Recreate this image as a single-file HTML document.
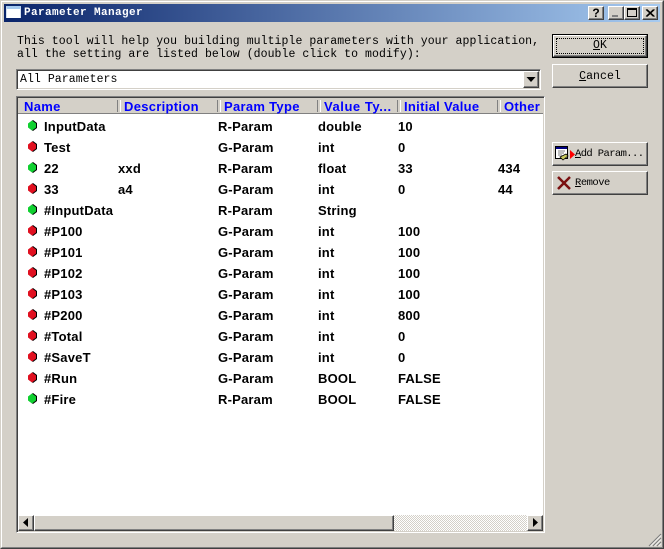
<!DOCTYPE html>
<html><head><meta charset="utf-8"><style>
html,body{margin:0;padding:0}
body{width:664px;height:549px;overflow:hidden;background:#d4d0c8;position:relative}
div,span.a,svg.a{position:absolute;box-sizing:border-box}
.mono{font-family:"Liberation Mono",monospace;font-size:11.5px;letter-spacing:.06px;color:#000;white-space:pre}
.btn{background:#d4d0c8;border:1px solid;border-color:#fff #404040 #404040 #fff;box-shadow:inset -1px -1px 0 #808080}
.cap{background:#d4d0c8;border:1px solid;border-color:#fff #404040 #404040 #fff;box-shadow:inset -1px -1px 0 #808080}
.h{position:absolute;top:99px;font:bold 13px "Liberation Sans",sans-serif;color:#0000ff;letter-spacing:.3px;line-height:15px;white-space:pre}
.sep{position:absolute;top:100px;width:2px;height:12px;border-left:1px solid #808080;border-right:1px solid #fff}
.t{position:absolute;font:bold 13px "Liberation Sans",sans-serif;letter-spacing:.2px;color:#000;line-height:16px;white-space:pre}
u{text-decoration:underline}
</style></head><body>
<div style="left:0;top:0;width:664px;height:549px;border:1px solid;border-color:#d4d0c8 #404040 #404040 #d4d0c8"></div>
<div style="left:1px;top:1px;width:662px;height:547px;border:1px solid;border-color:#fff #808080 #808080 #fff"></div>

<div style="left:4px;top:4px;width:656px;height:18px;background:linear-gradient(90deg,#0a246a,#a6caf0)"></div>
<div style="left:6px;top:6px;width:15px;height:12px;background:#fff;border-top:3px solid #a6caf0;border-left:1px solid #d4e0f0;border-right:1px solid #d4e0f0"></div>
<div class="mono" style="left:24px;top:6px;font-weight:bold;font-size:11px;letter-spacing:.4px;color:#fff;line-height:15px">Parameter Manager</div>

<div class="cap" style="left:588px;top:6px;width:16px;height:14px"></div>
<div style="left:588px;top:6px;width:16px;height:14px;font:bold 12px/14px 'Liberation Sans',sans-serif;text-align:center;color:#000">?</div>
<div class="cap" style="left:608px;top:6px;width:16px;height:14px"></div>
<div style="left:612px;top:15px;width:6px;height:2px;background:#808080"></div>
<div class="cap" style="left:624px;top:6px;width:16px;height:14px"></div>
<div style="left:627px;top:8px;width:10px;height:9px;border:1px solid #000;border-top-width:2px"></div>
<div class="cap" style="left:642px;top:6px;width:16px;height:14px"></div>
<svg class="a" style="left:642px;top:6px" width="16" height="14"><path d="M4 3.500L11.500 10.500M5 3.500L12.500 10.500M11.500 3.500L4 10.500M12.500 3.500L5 10.500" stroke="#000" stroke-width="1"/></svg>

<div class="mono" style="left:17px;top:35px;line-height:13px">This tool will help you building multiple parameters with your application,
all the setting are listed below (double click to modify):</div>

<!-- combo -->
<div style="left:16px;top:69px;width:525px;height:21px;background:#fff;border:1px solid;border-color:#808080 #fff #fff #808080;box-shadow:inset 1px 1px 0 #404040,inset -1px -1px 0 #d4d0c8"></div>
<div class="mono" style="left:20px;top:73px;line-height:14px">All Parameters</div>
<div class="btn" style="left:523px;top:71px;width:16px;height:17px"></div>
<svg class="a" style="left:523px;top:71px" width="16" height="17"><path d="M3.500 6h9l-4.500 5z" fill="#000"/></svg>

<!-- buttons -->
<div style="left:552px;top:34px;width:96px;height:24px;background:#000"></div>
<div class="btn" style="left:553px;top:35px;width:94px;height:22px"></div>
<div style="left:556px;top:38px;width:88px;height:16px;border:1px dotted #000"></div>
<div class="mono" style="left:552px;top:38px;width:96px;text-align:center;line-height:15px"><u>O</u>K</div>
<div class="btn" style="left:552px;top:64px;width:96px;height:24px"></div>
<div class="mono" style="left:552px;top:69px;width:96px;text-align:center;line-height:15px"><u>C</u>ancel</div>

<div class="btn" style="left:552px;top:142px;width:96px;height:24px"></div>
<svg class="a" style="left:555px;top:146px" width="20" height="16">
<rect x="0.500" y="0.500" width="12" height="12" fill="#fff" stroke="#000"/><rect x="1" y="1" width="11" height="2" fill="#000080"/>
<path d="M3 5h7M3 7h6M3 9h4" stroke="#808080"/><path d="M5 11l3 3 5-4-2-2z" fill="#c8c860" stroke="#000" stroke-width=".8"/>
<path d="M15 4l5 4.500-5 4.500z" fill="#ff0000"/></svg>
<div class="mono" style="left:575px;top:147px;font-size:10.500px;letter-spacing:-.6px;line-height:14px"><u>A</u>dd Param...</div>
<div class="btn" style="left:552px;top:171px;width:96px;height:24px"></div>
<svg class="a" style="left:557px;top:176px" width="14" height="14"><path d="M1 1L13 13M13 1L1 13" stroke="#7a1010" stroke-width="2.500"/></svg>
<div class="mono" style="left:575px;top:176px;font-size:10.500px;letter-spacing:-.5px;line-height:14px"><u>R</u>emove</div>

<!-- list -->
<div style="left:16px;top:96px;width:529px;height:437px;background:#fff;border:1px solid;border-color:#808080 #fff #fff #808080;box-shadow:inset 1px 1px 0 #404040,inset -1px -1px 0 #d4d0c8"></div>
<div style="left:18px;top:98px;width:525px;height:16px;background:#d4d0c8;border-bottom:1px solid #808080"></div>
<span class="h" style="left:24px">Name</span><span class="h" style="left:124px">Description</span><span class="h" style="left:224px">Param Type</span><span class="h" style="left:324px;letter-spacing:.55px">Value Ty...</span><span class="h" style="left:404px">Initial Value</span><span class="h" style="left:504px">Other</span>
<span class="sep" style="left:117px"></span><span class="sep" style="left:217px"></span><span class="sep" style="left:317px"></span><span class="sep" style="left:397px"></span><span class="sep" style="left:497px"></span>

<svg class="a" style="left:0;top:0" width="60" height="420">
<defs><g id="d"><path transform="translate(1 0)" d="M0-5.500L4-2.500V2.500L0 5.500L-4 2.500V-2.500Z" fill="#000"/><path d="M0-5L4-2V2L0 5L-4 2V-2Z"/></g></defs>
<g fill="#10d030">
<use href="#d" x="32" y="125.500"/><use href="#d" x="32" y="167.500"/><use href="#d" x="32" y="209.500"/><use href="#d" x="32" y="398.500"/>
</g>
<g fill="#e01020">
<use href="#d" x="32" y="146.500"/><use href="#d" x="32" y="188.500"/><use href="#d" x="32" y="230.500"/><use href="#d" x="32" y="251.500"/><use href="#d" x="32" y="272.500"/><use href="#d" x="32" y="293.500"/><use href="#d" x="32" y="314.500"/><use href="#d" x="32" y="335.500"/><use href="#d" x="32" y="356.500"/><use href="#d" x="32" y="377.500"/>
</g>
</svg>

<span class="t" style="left:44px;top:119px">InputData</span><span class="t" style="left:218px;top:119px">R-Param</span><span class="t" style="left:318px;top:119px">double</span><span class="t" style="left:398px;top:119px">10</span>
<span class="t" style="left:44px;top:140px">Test</span><span class="t" style="left:218px;top:140px">G-Param</span><span class="t" style="left:318px;top:140px">int</span><span class="t" style="left:398px;top:140px">0</span>
<span class="t" style="left:44px;top:161px">22</span><span class="t" style="left:118px;top:161px">xxd</span><span class="t" style="left:218px;top:161px">R-Param</span><span class="t" style="left:318px;top:161px">float</span><span class="t" style="left:398px;top:161px">33</span><span class="t" style="left:498px;top:161px">434</span>
<span class="t" style="left:44px;top:182px">33</span><span class="t" style="left:118px;top:182px">a4</span><span class="t" style="left:218px;top:182px">G-Param</span><span class="t" style="left:318px;top:182px">int</span><span class="t" style="left:398px;top:182px">0</span><span class="t" style="left:498px;top:182px">44</span>
<span class="t" style="left:44px;top:203px">#InputData</span><span class="t" style="left:218px;top:203px">R-Param</span><span class="t" style="left:318px;top:203px">String</span>
<span class="t" style="left:44px;top:224px">#P100</span><span class="t" style="left:218px;top:224px">G-Param</span><span class="t" style="left:318px;top:224px">int</span><span class="t" style="left:398px;top:224px">100</span>
<span class="t" style="left:44px;top:245px">#P101</span><span class="t" style="left:218px;top:245px">G-Param</span><span class="t" style="left:318px;top:245px">int</span><span class="t" style="left:398px;top:245px">100</span>
<span class="t" style="left:44px;top:266px">#P102</span><span class="t" style="left:218px;top:266px">G-Param</span><span class="t" style="left:318px;top:266px">int</span><span class="t" style="left:398px;top:266px">100</span>
<span class="t" style="left:44px;top:287px">#P103</span><span class="t" style="left:218px;top:287px">G-Param</span><span class="t" style="left:318px;top:287px">int</span><span class="t" style="left:398px;top:287px">100</span>
<span class="t" style="left:44px;top:308px">#P200</span><span class="t" style="left:218px;top:308px">G-Param</span><span class="t" style="left:318px;top:308px">int</span><span class="t" style="left:398px;top:308px">800</span>
<span class="t" style="left:44px;top:329px">#Total</span><span class="t" style="left:218px;top:329px">G-Param</span><span class="t" style="left:318px;top:329px">int</span><span class="t" style="left:398px;top:329px">0</span>
<span class="t" style="left:44px;top:350px">#SaveT</span><span class="t" style="left:218px;top:350px">G-Param</span><span class="t" style="left:318px;top:350px">int</span><span class="t" style="left:398px;top:350px">0</span>
<span class="t" style="left:44px;top:371px">#Run</span><span class="t" style="left:218px;top:371px">G-Param</span><span class="t" style="left:318px;top:371px">BOOL</span><span class="t" style="left:398px;top:371px">FALSE</span>
<span class="t" style="left:44px;top:392px">#Fire</span><span class="t" style="left:218px;top:392px">R-Param</span><span class="t" style="left:318px;top:392px">BOOL</span><span class="t" style="left:398px;top:392px">FALSE</span>

<!-- scrollbar -->
<div style="left:18px;top:515px;width:525px;height:16px;background:#e8e6e1;background-image:conic-gradient(#d4d0c8 25%,#fff 0 50%,#d4d0c8 0 75%,#fff 0);background-size:2px 2px"></div>
<div class="btn" style="left:18px;top:515px;width:16px;height:16px"></div>
<svg class="a" style="left:18px;top:515px" width="16" height="16"><path d="M10 3v9l-5-4.500z" fill="#000"/></svg>
<div class="btn" style="left:34px;top:515px;width:360px;height:16px"></div>
<div class="btn" style="left:527px;top:515px;width:16px;height:16px"></div>
<svg class="a" style="left:527px;top:515px" width="16" height="16"><path d="M6 3v9l5-4.500z" fill="#000"/></svg>

<!-- grip -->
<svg class="a" style="left:648px;top:533px" width="14" height="14"><path d="M13 1L1 13M13 5L5 13M13 9L9 13" stroke="#808080" stroke-width="1.200"/><path d="M13 2.500L2.500 13M13 6.500L6.500 13M13 10.500L10.500 13" stroke="#fff" stroke-width=".8"/></svg>
</body></html>
